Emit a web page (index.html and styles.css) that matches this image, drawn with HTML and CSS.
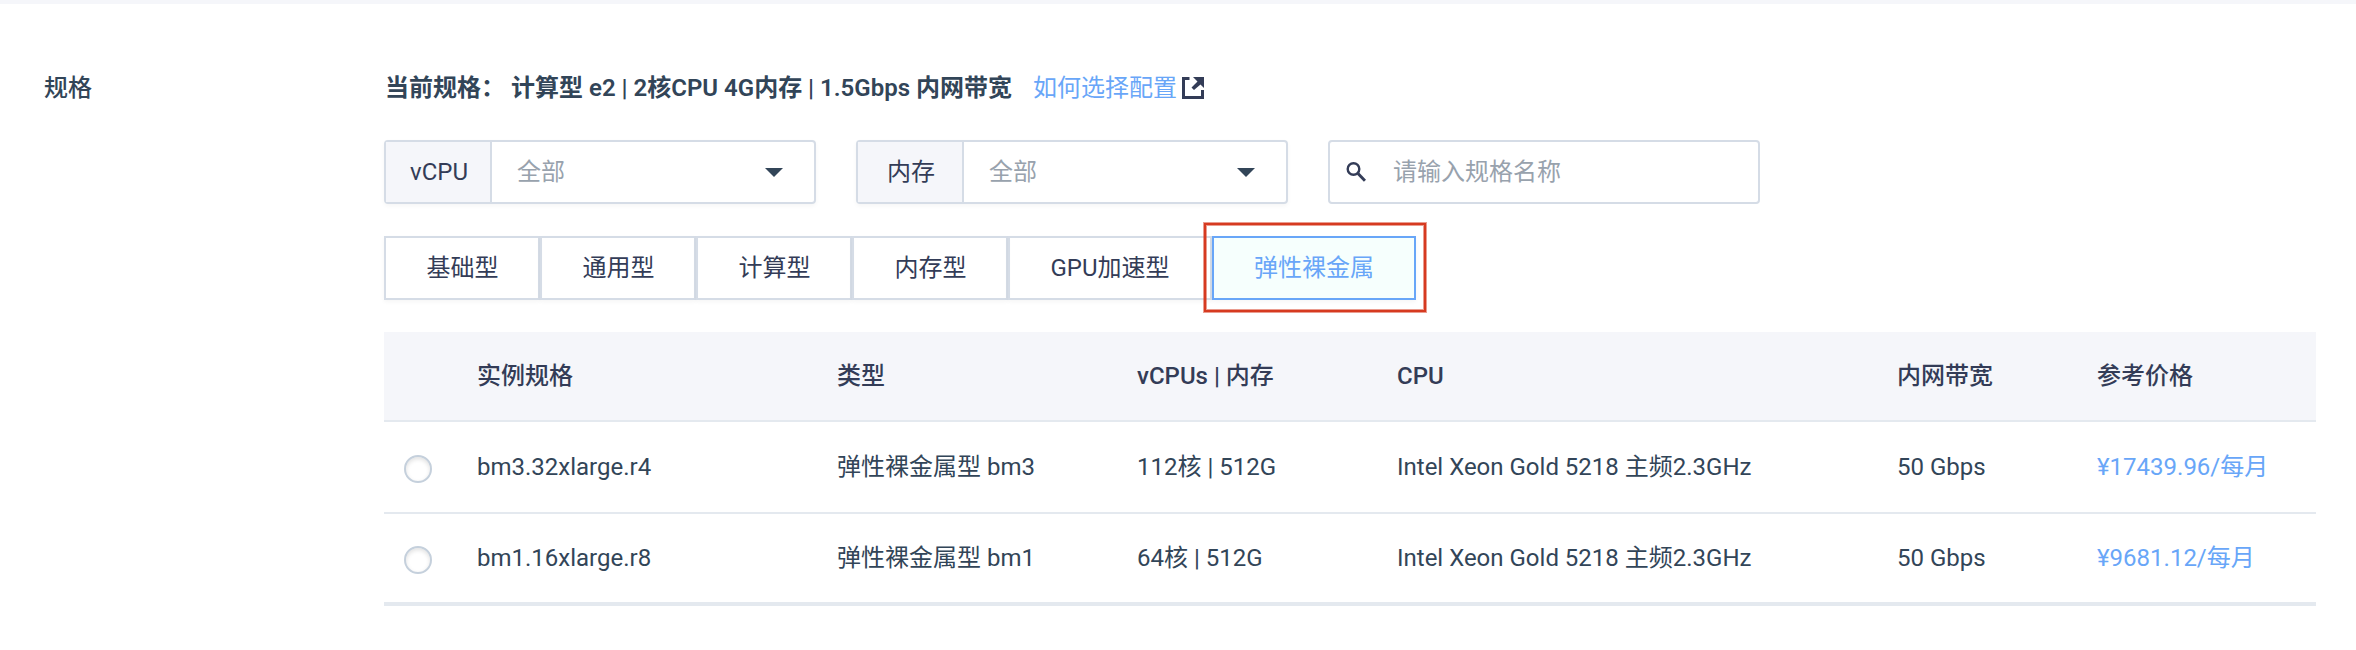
FILE: index.html
```html
<!DOCTYPE html>
<html lang="zh-CN">
<head>
<meta charset="utf-8">
<title>规格</title>
<link rel="stylesheet" href="styles.css">
</head>
<body>
<main class="panel">
  <div class="field-label">规格</div>
  <section class="content">
    <div class="current">
      <span class="current-label">当前规格：</span>
      <span class="current-value">计算型 e2 | 2核CPU 4G内存 | 1.5Gbps 内网带宽</span>
      <a class="help">如何选择配置</a>
      <svg class="external" viewBox="0 0 22 22"><path d="M7.500 1.500H1.500V20.500H20.500V13" fill="none" stroke="currentColor" stroke-width="3"/><path d="M11 0H22V11L18.500 7.500L12 13L9.500 10.500L15.500 4.500Z" fill="currentColor"/></svg>
    </div>
    <div class="filters">
      <div class="select"><span class="addon">vCPU</span><span class="value">全部</span><i class="caret"></i></div>
      <div class="select"><span class="addon">内存</span><span class="value">全部</span><i class="caret"></i></div>
      <div class="search">
        <svg class="search-icon" viewBox="0 0 20 20"><circle cx="7.500" cy="7" r="5.800" fill="none" stroke="currentColor" stroke-width="2.400"/><path d="M12 11.500L19 18.800" stroke="currentColor" stroke-width="3"/></svg>
        <span>请输入规格名称</span>
      </div>
    </div>
    <div class="tabs">
      <span class="tab">基础型</span><span class="tab">通用型</span><span class="tab">计算型</span><span class="tab">内存型</span><span class="tab wide">GPU加速型</span><span class="tab wide active">弹性裸金属</span>
    </div>
    <div class="table">
      <div class="row head"><span></span><span>实例规格</span><span>类型</span><span>vCPUs | 内存</span><span>CPU</span><span>内网带宽</span><span>参考价格</span></div>
      <div class="row"><span class="radio"></span><span>bm3.32xlarge.r4</span><span>弹性裸金属型 bm3</span><span>112核 | 512G</span><span>Intel Xeon Gold 5218 主频2.3GHz</span><span>50 Gbps</span><span class="price">¥17439.96/每月</span></div>
      <div class="row last"><span class="radio"></span><span>bm1.16xlarge.r8</span><span>弹性裸金属型 bm1</span><span>64核 | 512G</span><span>Intel Xeon Gold 5218 主频2.3GHz</span><span>50 Gbps</span><span class="price">¥9681.12/每月</span></div>
    </div>
  </section>
</main>
</body>
</html>
```
FILE: styles.css
```css
* { box-sizing: border-box; }
body {
  margin: 0;
  background: #fff;
  color: #324558;
  font: 24px/36px Roboto, "Noto Sans CJK SC", sans-serif;
}
.panel {
  display: flex;
  height: 650px;
  padding: 66px 40px 0 44px;
  border-top: 4px solid #f5f6fa;
}
.field-label { width: 340px; font-weight: 500; }
.content { width: 1932px; }
.current { display: flex; height: 36px; align-items: center; padding-left: 1px; white-space: nowrap; }
.current-label { width: 126px; font-weight: 600; }
.current-value { width: 522px; font-weight: 600; }
.help { color: #68a6f8; }
.external { width: 22px; height: 22px; margin-left: 5px; color: #333c57; }
.filters { display: flex; gap: 40px; margin-top: 34px; }
.select, .search {
  display: flex;
  align-items: center;
  width: 432px;
  height: 64px;
  border: 2px solid #d5dce6;
  border-radius: 4px;
}
.select { box-shadow: 0 2px 4px rgba(0, 0, 0, .04); }
.addon {
  width: 106px;
  height: 60px;
  padding-left: 2px;
  border-right: 2px solid #d5dce6;
  background: #f5f6fa;
  color: #333c57;
  line-height: 60px;
  text-align: center;
}
.value { flex: 1; padding-left: 25px; color: #98a2ad; }
.caret {
  margin-right: 31px;
  border: solid transparent;
  border-width: 9px 9px 0;
  border-top-color: #324558;
}
.search { padding-left: 16px; color: #98a2ad; }
.search-icon { width: 20px; height: 20px; margin-right: 27px; color: #333c57; }
.tabs { display: flex; margin-top: 32px; }
.tab {
  width: 156px;
  height: 64px;
  padding-left: 1px;
  border: 2px solid #d5dce6;
  box-shadow: 0 2px 4px rgba(0, 0, 0, .04);
  color: #333c57;
  line-height: 60px;
  text-align: center;
}
.tab.wide { width: 204px; padding-left: 0; }
.tab.active { position: relative; border-color: #68a6f8; background: #f6fffd; color: #68a6f8; }
.tab.active::after {
  content: "";
  position: absolute;
  inset: -15px -12px -14px -10px;
  border: 2px solid #d63a20;
  box-shadow: 0 0 0 1px rgba(214, 58, 32, .5), inset 0 0 0 1px rgba(214, 58, 32, .5);
}
.table { margin-top: 32px; }
.row {
  display: grid;
  grid-template-columns: 93px 360px 300px 260px 500px 200px 219px;
  align-items: center;
  height: 92px;
  border-bottom: 2px solid #e4e9ef;
  white-space: nowrap;
}
.head { height: 90px; background: #f5f6fa; color: #333c57; font-weight: 500; }
.last { border-bottom-width: 4px; }
.radio {
  width: 28px;
  height: 28px;
  margin: 4px 0 0 20px;
  border: 2px solid #c5d0dc;
  border-radius: 50%;
  box-shadow: inset 0 2px 4px rgba(0, 0, 0, .12);
}
.price { color: #68a6f8; }
```
